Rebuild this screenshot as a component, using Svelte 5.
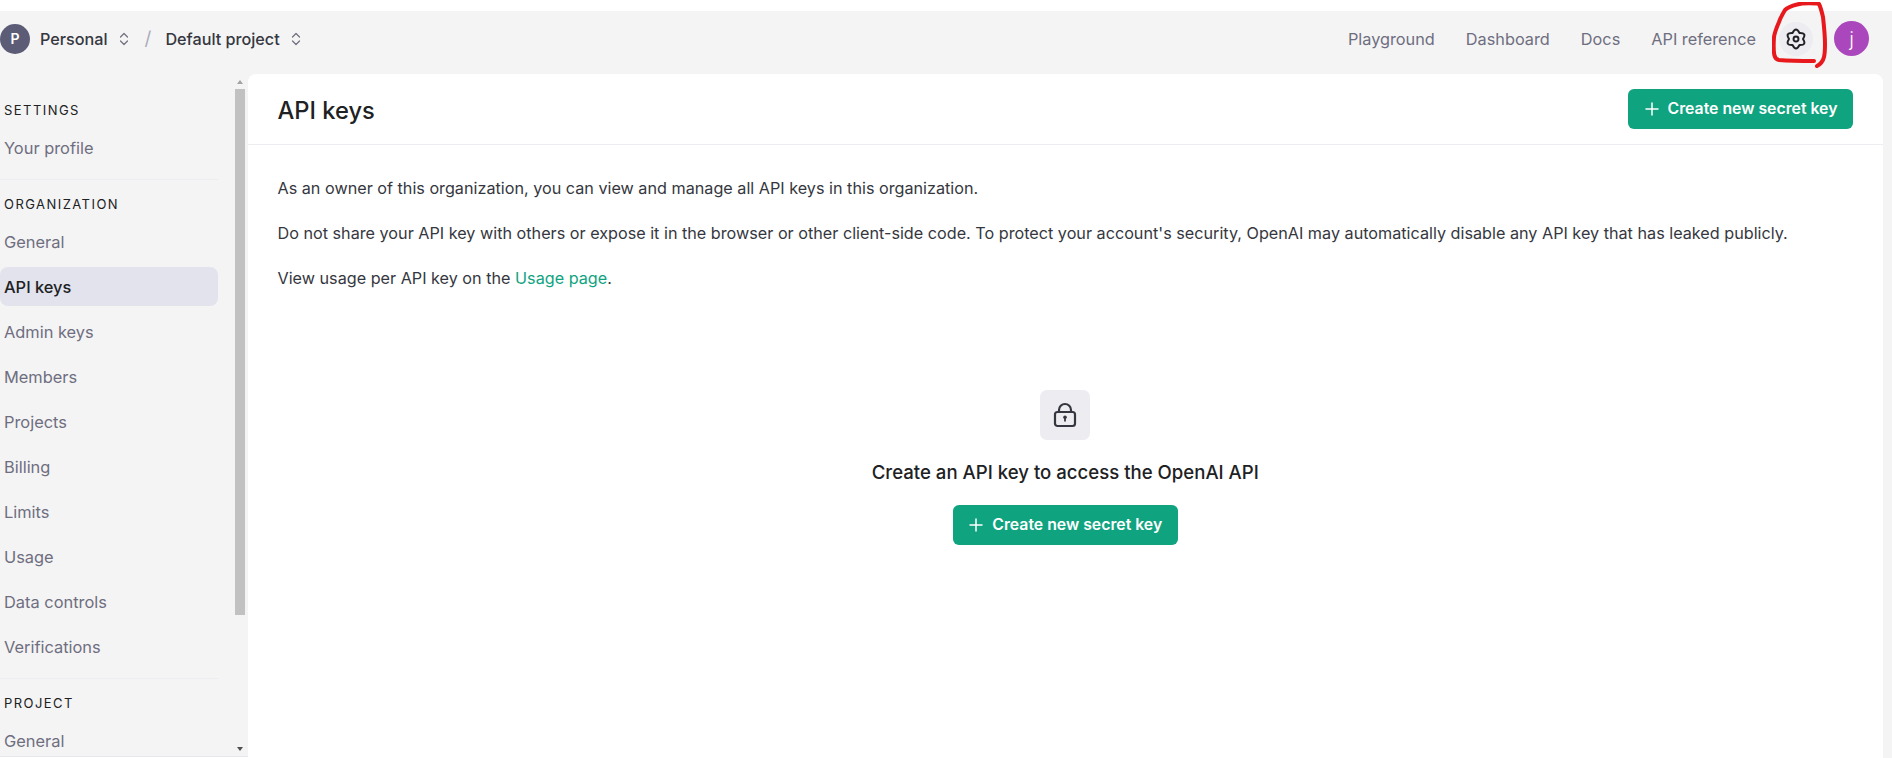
<script>
  const topLinks = ['Playground', 'Dashboard', 'Docs', 'API reference'];
  const groups = [
    { title: 'SETTINGS', items: ['Your profile'] },
    { title: 'ORGANIZATION', items: ['General', 'API keys', 'Admin keys', 'Members', 'Projects', 'Billing', 'Limits', 'Usage', 'Data controls', 'Verifications'] },
    { title: 'PROJECT', items: ['General'] }
  ];
</script>

{#snippet updown()}
  <svg class="updown" viewBox="0 0 12 16" width="12" height="16" fill="none" stroke="currentColor" stroke-width="1.2" stroke-linecap="round" stroke-linejoin="round"><path d="M2.5 6 6 2.5 9.5 6" /><path d="M2.5 10 6 13.5 9.5 10" /></svg>
{/snippet}

{#snippet plus()}
  <svg viewBox="0 0 16 16" width="16" height="16" fill="none" stroke="currentColor" stroke-width="1.5" stroke-linecap="round"><path d="M8 2v12M2 8h12" /></svg>
{/snippet}

{#snippet createButton()}
  <button class="create">{@render plus()}<span>Create new secret key</span></button>
{/snippet}

<div class="page">
  <header class="top">
    <div class="crumbs">
      <span class="org">P</span>
      <span class="crumb first">Personal</span>
      {@render updown()}
      <span class="slash">/</span>
      <span class="crumb">Default project</span>
      {@render updown()}
    </div>
    <nav class="links">
      {#each topLinks as link}<span>{link}</span>{/each}
      <span class="gear">
        <svg viewBox="0 0 24 24" width="22" height="22" fill="none" stroke="#202123" stroke-width="2.100" stroke-linejoin="round"><path d="M15.800 5.420Q12 -2 8.200 5.420-.12 5 4.400 12-.12 19 8.200 18.580 12 26 15.800 18.580 24.120 19 19.600 12 24.120 5 15.800 5.420Z" /><circle cx="12" cy="12" r="2.700" /></svg>
      </span>
      <span class="avatar">j</span>
    </nav>
    <svg class="mark" viewBox="0 0 56 66" width="56" height="66" fill="none" stroke="#e8191c" stroke-width="4" stroke-linecap="round" stroke-linejoin="round"><path d="M45 1.500C38 1 30 1 25 2.500 19 4 15 6 13 8 10 13 8 17 7 20 4 27 2.500 31 2 35 1.500 42 1.500 48 2.300 53 3 56 4 57.500 7 58c12 1 24 1 35 1" /><path d="M47 2c2 4 3 9 4 13 1 9 2 18 2 27 0 5 0 9-1 13-1 4-3 7-7 9" /></svg>
  </header>

  <div class="body">
    <aside class="side">
      <div class="menu">
        {#each groups as group, i}
          <section class:ruled={i > 0}>
            <h3>{group.title}</h3>
            {#each group.items as item}
              <a class:active={item === 'API keys'}>{item}</a>
            {/each}
          </section>
        {/each}
      </div>
      <div class="scroll">
        <i class="up"></i>
        <b></b>
        <i class="down"></i>
      </div>
    </aside>

    <main class="panel">
      <div class="head">
        <h1>API keys</h1>
        {@render createButton()}
      </div>
      <div class="content">
        <p>As an owner of this organization, you can view and manage all API keys in this organization.</p>
        <p>Do not share your API key with others or expose it in the browser or other client-side code. To protect your account's security, OpenAI may automatically disable any API key that has leaked publicly.</p>
        <p>View usage per API key on the <a class="green">Usage page</a>.</p>
        <div class="empty">
          <div class="tile">
            <svg viewBox="0 0 24 26" width="24" height="26" fill="none" stroke="#353740" stroke-width="2.200" stroke-linejoin="round"><rect x="2" y="10" width="20" height="14" rx="2.500" /><path d="M6 10V8a6 6 0 0 1 12 0v2" /><circle cx="12" cy="15.200" r="1.800" fill="#353740" stroke="none" /><path d="M12 15.500v3.300" stroke-width="1.800" stroke-linecap="round" /></svg>
          </div>
          <h2>Create an API key to access the OpenAI API</h2>
          {@render createButton()}
        </div>
      </div>
    </main>
  </div>
</div>

<style>
  :global(body) { margin: 0; background: #fff; overflow: hidden; }
  .page {
    height: 758px; box-sizing: border-box; padding-top: 11px; overflow: hidden;
    font-family: Inter, "Liberation Sans", sans-serif; font-size: 16px; color: #202123;
    display: flex; flex-direction: column; background: #fff;
  }
  .top {
    position: relative; height: 63px; flex: none; box-sizing: border-box; background: #f4f4f4; padding-bottom: 8px;
    display: flex; align-items: center; justify-content: space-between; padding-right: 23px;
  }
  .crumbs { display: flex; align-items: center; }
  .org {
    width: 30px; height: 30px; border-radius: 50%; background: #5c5c77; color: #fff;
    display: flex; align-items: center; justify-content: center; font-size: 14px; font-weight: 600;
  }
  .crumb { font-size: 16.200px; font-weight: 500; color: #353740; }
  .first { margin-left: 10px; }
  .updown { color: #6e6e80; margin-left: 10px; }
  .slash { color: #acacbe; margin: 0 14px 0 15px; font-size: 19px; }
  .links { display: flex; align-items: center; gap: 31px; color: #6e6e80; font-size: 16.300px; }
  .gear {
    width: 34px; height: 34px; border-radius: 50%; background: #ececf1; margin-left: -8px;
    display: flex; align-items: center; justify-content: center;
  }
  .avatar {
    width: 35px; height: 35px; border-radius: 50%; background: #ab47bc; color: #fff; margin-left: -10px;
    display: flex; align-items: center; justify-content: center; font-size: 20px; font-weight: 300;
  }
  .mark { position: absolute; left: 1772px; top: -9px; }

  .body { flex: 1; min-height: 0; display: flex; background: #f4f4f4; padding-right: 9px; }
  .side {
    width: 248px; flex: none; display: flex; overflow: hidden;
    border-bottom: 1px solid #fff; box-shadow: inset 0 -1px 0 #e6e6ec;
  }
  .menu { width: 218px; flex: none; }
  section { padding: 27px 0 0; }
  section.ruled { margin-top: 12px; border-top: 1px solid #ececf1; padding-top: 15px; }
  h3 { margin: 0 0 9px 4px; font-size: 13px; font-weight: 400; letter-spacing: 1.450px; line-height: 18px; color: #202123; }
  section a {
    display: flex; align-items: center; height: 39px; margin-bottom: 6px; padding-left: 4px;
    border-radius: 8px; color: #6e6e80; font-size: 16.400px;
  }
  section a.active { background: #e3e3ee; color: #202123; font-weight: 500; }
  .scroll { width: 10px; margin-left: 17px; padding-top: 6px; display: flex; flex-direction: column; align-items: center; }
  .scroll b { width: 10px; height: 526px; background: #c1c1c1; margin-top: 5px; flex: none; }
  .scroll i { width: 0; height: 0; border: 3px solid transparent; flex: none; }
  .scroll .up { border-bottom: 4px solid #a3a3a3; border-top: 0; }
  .scroll .down { border-top: 4px solid #505050; border-bottom: 0; margin-top: 132px; }

  .panel { flex: 1; background: #fff; border-radius: 8px 8px 0 0; min-width: 0; display: flex; flex-direction: column; }
  .head {
    height: 71px; flex: none; box-sizing: border-box; border-bottom: 1px solid #ececf1; padding-top: 1px;
    display: flex; align-items: center; justify-content: space-between; padding-left: 29.500px; padding-right: 30px;
  }
  h1 { margin: 2px 0 0; font-size: 23.700px; font-weight: 500; color: #202123; }
  .create {
    width: 225px; height: 40px; border: 0; border-radius: 6px; background: #10a37f; color: #fff;
    display: flex; align-items: center; justify-content: center; gap: 8px; padding: 0 0 1px;
    font: 600 15.800px Inter, "Liberation Sans", sans-serif;
  }
  .head .create { margin-top: -1px; }
  .content { padding: 33px 30px 0 29.500px; font-size: 16.200px; color: #353740; }
  p { margin: 0 0 25px; line-height: 20px; color: #353740; }
  .green { color: #10a37f; }
  .empty { display: flex; flex-direction: column; align-items: center; padding-top: 77px; }
  .tile {
    width: 50px; height: 50px; border-radius: 7px; background: #ececf1;
    display: flex; align-items: center; justify-content: center;
  }
  h2 { margin: 20px 0 21px; font-size: 18.600px; font-weight: 500; line-height: 24px; color: #202123; }
</style>
